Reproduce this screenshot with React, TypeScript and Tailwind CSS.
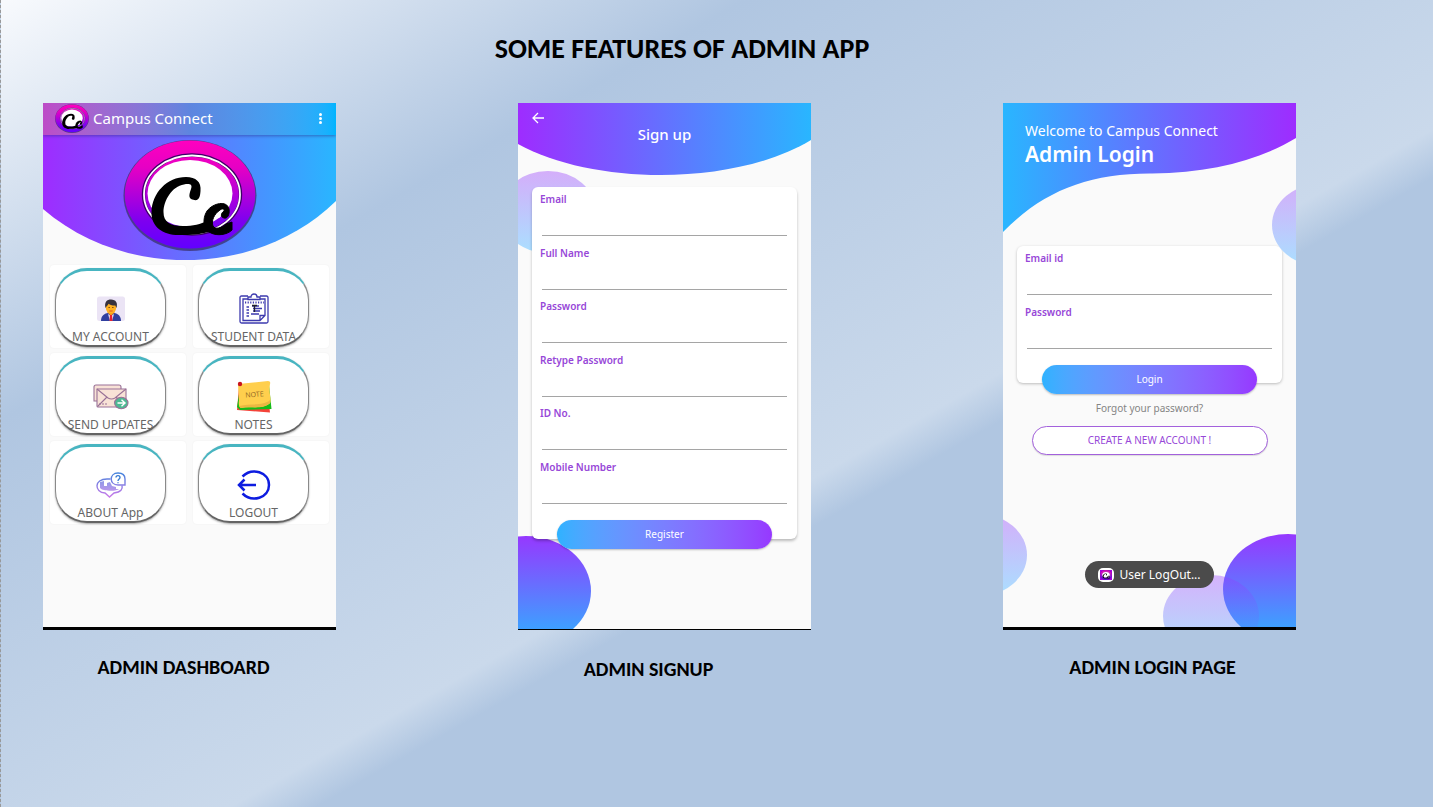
import React from "react";

const heading = "font-[Carlito,Lato,sans-serif] font-bold text-black";

function Mark({ className, id }: { className: string; id: string }) {
  return (
    <svg className={className} viewBox="0 0 134 112" preserveAspectRatio="none" aria-hidden="true">
      <defs>
        <linearGradient id={id} x1="0" y1="0" x2="0" y2="1">
          <stop offset="0" stopColor="#ff00bf" />
          <stop offset="0.25" stopColor="#e600c4" />
          <stop offset="0.75" stopColor="#7d00f0" />
          <stop offset="1" stopColor="#6200ff" />
        </linearGradient>
      </defs>
      <ellipse cx="67" cy="56.5" rx="66.5" ry="55.5" fill="#39306b" opacity="0.75" />
      <ellipse cx="67" cy="55.5" rx="65.3" ry="54" fill={`url(#${id})`} />
      <ellipse cx="69" cy="55.5" rx="48.5" ry="39.5" fill="none" stroke="#3c0065" strokeWidth="3.4" />
      <ellipse cx="69" cy="55.5" rx="48" ry="39" fill="none" stroke="#fff" strokeWidth="1.8" />
      <ellipse cx="67" cy="54.5" rx="42.5" ry="33.5" fill="#fff" />
      <path d="M68 60 C65 58 67 53 68 50 C70 45 66 44.5 61 45.5 C49 47 40.5 62 40.5 73 C40.5 83 47 87 60 87 C70 87 78 85 84 82 L88 92 C78 96 66 96 58 96 C42 97 28 89 28.5 73 C29 54 44 38 63 38 C73 38 78.5 43 77.5 52 C77 60 75 63 68 60Z" fill="#000" />
      <path d="M101 79 C97 78 98 74 101 72 C102 70 99 69 97 71 C91 75 88 82 90 87 C92 91 99 89 103 85 L109 83 V91 C104 96 94 97 88 94 C80 91 79 80 84 72 C90 64 104 61 106 70 C107 76 104 80 101 79Z" fill="#000" stroke="#000" strokeWidth="1" />
    </svg>
  );
}

function AccountIcon() {
  return (
    <svg width="30" height="26" viewBox="0 0 30 26">
      <rect x="1" y="0.5" width="28" height="24.5" rx="2.5" fill="#ebe4f5" />
      <path d="M5 25 C5 19 9 17.5 12 17 H18 C22 17.5 25 20 25 25Z" fill="#303f9f" />
      <path d="M11.5 16.5 L15 20 L18.5 16.5 V13 H11.5Z" fill="#f59a16" />
      <path d="M12 18 L15 20 L18 18 L16 25 H14Z" fill="#e7ddf2" />
      <path d="M14 19 H16 L16.5 25 H13.5Z" fill="#e62131" />
      <ellipse cx="15" cy="11.5" rx="5.2" ry="6" fill="#ffb022" />
      <path d="M9.5 12 C8 6 11 3.5 15 3.5 C20 3.5 22 7 20.5 12 L19.3 9.5 C16 9.5 13 8.5 12.5 7.7 C12 9.5 10.8 9.5 10.8 10Z" fill="#37323e" />
      <path d="M12.5 11.5 H13.8 M16.2 11.5 H17.5" stroke="#70420f" strokeWidth="1" />
      <path d="M13.3 15 H16.7" stroke="#d9451e" strokeWidth="0.8" />
    </svg>
  );
}

function ClipboardIcon() {
  return (
    <svg width="30" height="32" viewBox="0 0 30 32" fill="none" stroke="#3d3aae" strokeWidth="1.3">
      <path d="M9 3 H2.5 Q1 3 1 4.5 V28.5 Q1 30 2.5 30 H27.5 Q29 30 29 28.5 V4.5 Q29 3 27.5 3 H21" />
      <path d="M9 6.5 V4 H12 C12 0 18 0 18 4 H21 V6.5Z" />
      <path d="M9 6 H4 V27.5 H21 L26 22.5 V6 H21 M21 27.5 V22.5 H26" />
      <path d="M6 9.5 H25" strokeDasharray="1.2 1.4" strokeWidth="2" />
      <path d="M7.5 14 H10 M7.5 17 H10 M7.5 20 H10 M7.5 23 H10" />
      <path d="M13 13 H20 M14 15.5 H23 M14 18 H21 M12 21 H20" />
      <path d="M13 12.5 H18 M15.5 12 V19" stroke="#20202b" />
    </svg>
  );
}

function MailIcon() {
  return (
    <svg width="36" height="26" viewBox="0 0 36 26" fill="#f8e2d6" stroke="#997197" strokeWidth="1.1">
      <path d="M1 3 Q1 1 3 1 H26 Q28 1 28 3 V17 H1Z" />
      <path d="M4 5 H33 V22 Q33 23 32 23 H5 Q4 23 4 22Z" />
      <path d="M4 5 L15 14 Q18.5 16 22 14 L33 5 M4.5 22.5 L14 13 M32.5 22.5 L23 13" fill="none" />
      <path d="M6 20 H15" strokeDasharray="2 1" />
      <ellipse cx="28.3" cy="19" rx="6.7" ry="5.7" fill="#4eb993" />
      <path d="M24.5 19 H31.5 M28.5 15.8 L32 19 L28.5 22.2" stroke="#fff" strokeWidth="1.4" fill="none" />
    </svg>
  );
}

function NoteIcon() {
  return (
    <svg width="36" height="34" viewBox="0 0 36 34">
      <path d="M3 7 L31 9 L34 32.5 L1 30Z" fill="#f44339" />
      <path d="M4 8 L33 5 L35.5 29 L4 30 L1 27Z" fill="#16bc18" />
      <path d="M2 4 L32 1 Q35 1 34 4 C32 13 37 22 33 24 C26 29 16 26 5 28 Q2 27 3 20Z" fill="#ffcf4d" />
      <path d="M5 28 C16 26 27 30 34 23 L34 20 C28 26 15 23 3 26Z" fill="#ecb743" />
      <circle cx="4" cy="4" r="2.2" fill="#c9151e" />
      <text x="18.5" y="17" textAnchor="middle" fontSize="7" fontFamily="Open Sans, sans-serif" fill="#8c6424" transform="rotate(-4 18 15)">NOTE</text>
    </svg>
  );
}

function AboutIcon() {
  return (
    <svg width="30" height="26" viewBox="0 0 30 26">
      <defs>
        <linearGradient id="about-ink" gradientUnits="userSpaceOnUse" x1="0" y1="0" x2="0" y2="26">
          <stop stopColor="#3f84dc" /><stop offset="1" stopColor="#d078ea" />
        </linearGradient>
      </defs>
      <g fill="none" stroke="url(#about-ink)" strokeWidth="1.4">
        <path d="M14.5 7 H11 C-2 7 -2 20 9 21 L13.5 25 L18 21 C25 20 27 17 26 13.5" />
        <path d="M22 1 C13 1 13 13 22 13 H29 V7 C29 3 26 1 22 1Z" />
      </g>
      <path d="M4 14 V10 L8 9 V14 H11 V11 L14 10 L16 14 L20 15 V17 H23 C20 20 6 19 4 16Z" fill="url(#about-ink)" opacity="0.8" />
      <path d="M20 5.5 C20 3 24 3 24 5.5 C24 7 22 7 22 9 M22 10.3 V11.3" fill="none" stroke="#397bd2" strokeWidth="1.4" />
    </svg>
  );
}

function ExitIcon() {
  return (
    <svg width="34" height="30" viewBox="0 0 34 30" fill="none" stroke="#0d1ce0" strokeWidth="2.5">
      <path d="M5.5 6.5 C15 -3 32 2 32 15 C32 28 15 33 5.5 23.5" />
      <path d="M2 15 H19 M7.5 9.5 L2 15 L7.5 20.5" />
    </svg>
  );
}

const tiles = [
  { label: "MY ACCOUNT", icon: <AccountIcon /> },
  { label: "STUDENT DATA", icon: <ClipboardIcon /> },
  { label: "SEND UPDATES", icon: <MailIcon /> },
  { label: "NOTES", icon: <NoteIcon /> },
  { label: "ABOUT App", icon: <AboutIcon /> },
  { label: "LOGOUT", icon: <ExitIcon /> },
];

function Tile({ label, icon }: { label: string; icon: React.ReactNode }) {
  return (
    <div className="rounded-sm bg-white pt-[3px] pb-px pl-[5px] shadow-[0_0_2px_rgba(0,0,0,0.06)]">
      <button className="flex h-[79px] w-[111px] flex-col items-center justify-end rounded-[32px] border-x border-t-[3px] border-b-2 border-x-[#8a8a8a] border-t-[#48b5c1] border-b-[#646464] bg-white shadow-[0_1px_2px_rgba(0,0,0,0.35)]">
        <span className="mb-[2px] flex h-9 items-center justify-center">{icon}</span>
        <span className="text-[12px] leading-4 whitespace-nowrap text-[#666]">{label}</span>
      </button>
    </div>
  );
}

function Dashboard() {
  return (
    <section className="relative isolate flex h-[527px] w-[293px] flex-col overflow-hidden border-b-[3px] border-black bg-[#fafafa]">
      <header className="flex h-8 items-center bg-linear-to-r from-[#bd4cc7] via-[#5e85df] to-[#00b4ff] px-3 pb-[2px] shadow-[0_1px_3px_rgba(40,40,130,0.5)]">
        <Mark id="mark-small" className="h-[29px] w-[34px]" />
        <h2 className="ml-1 flex-1 text-[15px] text-white">Campus Connect</h2>
        <button aria-label="More options" className="flex flex-col gap-px px-[2px]">
          <i className="size-[3px] rounded-full bg-white" />
          <i className="size-[3px] rounded-full bg-white" />
          <i className="size-[3px] rounded-full bg-white" />
        </button>
      </header>
      <div className="relative -z-10 flex h-[130px] justify-center">
        <svg className="absolute inset-0 -z-10 h-[125px] w-full" viewBox="0 0 293 125" preserveAspectRatio="none">
          <defs><linearGradient id="dash-sky"><stop stopColor="#9e2cff" /><stop offset="1" stopColor="#29b6ff" /></linearGradient></defs>
          <path d="M0 0 H293 V66 C214 143 81 144 0 74Z" fill="url(#dash-sky)" />
        </svg>
        <Mark id="mark-large" className="mt-1 h-28 w-[134px]" />
      </div>
      <div className="grid grid-cols-2 gap-x-[7px] gap-y-[5px] px-[7px]">
        {tiles.map((tile) => <Tile key={tile.label} {...tile} />)}
      </div>
    </section>
  );
}

function Field({ id, label, type = "text" }: { id: string; label: string; type?: string }) {
  return (
    <div className="flex flex-col">
      <label htmlFor={id} className="text-[10px] leading-4 font-semibold text-[#9747d8]">{label}</label>
      <input id={id} type={type} className="mx-[2px] h-[29px] border-b border-[#a5a5a5] bg-transparent text-xs outline-none" />
    </div>
  );
}

const primary = "mx-auto mt-2 flex h-[29px] w-[215px] items-center justify-center rounded-full bg-linear-to-r from-[#2eb2ff] to-[#9638ff] text-[10px] text-white shadow-[0_1px_2px_rgba(0,0,0,0.25)]";

function SignUp() {
  const fields = [
    ["email", "Email", "email"], ["name", "Full Name", "text"],
    ["new-password", "Password", "password"], ["retype", "Retype Password", "password"],
    ["id-no", "ID No.", "text"], ["mobile", "Mobile Number", "tel"],
  ];
  return (
    <section className="relative isolate h-[527px] w-[293px] overflow-hidden border-b border-black bg-[#fafafa]">
      <svg className="absolute inset-0 -z-10 h-[526px] w-full" viewBox="0 0 293 526" preserveAspectRatio="none">
        <defs>
          <linearGradient id="sign-sky"><stop stopColor="#9e2cff" /><stop offset="1" stopColor="#29b6ff" /></linearGradient>
          <linearGradient id="sign-pale" x1="0" y1="0" x2="0" y2="1"><stop stopColor="#d4aefa" /><stop offset="1" stopColor="#aadfff" /></linearGradient>
          <linearGradient id="sign-deep" x1="0" y1="0" x2="0" y2="1"><stop stopColor="#9638ff" /><stop offset="1" stopColor="#2eb2ff" /></linearGradient>
        </defs>
        <path d="M0 0 H293 V37 C217 83 76 83 0 41Z" fill="url(#sign-sky)" />
        <ellipse cx="30" cy="109" rx="48" ry="41" fill="url(#sign-pale)" />
        <ellipse cx="8" cy="488" rx="65" ry="55" fill="url(#sign-deep)" />
      </svg>
      <header className="h-[84px] px-3 pt-2 text-white">
        <button aria-label="Back" className="block">
          <svg width="16" height="14" viewBox="0 0 16 14" fill="none" stroke="#fff" strokeWidth="1.3"><path d="M14 7 H3 M8 2 L3 7 L8 12" /></svg>
        </button>
        <h2 className="text-center text-[15px] leading-[18px] font-medium">Sign up</h2>
      </header>
      <form className="mx-[14px] h-[352px] rounded-md bg-white px-2 pt-1 shadow-[0_2px_3px_rgba(0,0,0,0.25)]">
        <div className="grid h-[321px] auto-rows-fr">
          {fields.map(([id, label, type]) => <Field key={id} id={id} label={label} type={type} />)}
        </div>
        <button type="button" className={primary}>Register</button>
      </form>
    </section>
  );
}

function Login() {
  return (
    <section className="relative isolate h-[527px] w-[293px] overflow-hidden border-b-[3px] border-black bg-[#fafafa]">
      <svg className="absolute inset-0 -z-10 h-[524px] w-full" viewBox="0 0 293 524" preserveAspectRatio="none">
        <defs>
          <linearGradient id="login-sky"><stop stopColor="#29b6ff" /><stop offset="1" stopColor="#9e2cff" /></linearGradient>
          <linearGradient id="login-pale" x1="0" y1="0" x2="0" y2="1"><stop stopColor="#d4aefa" /><stop offset="1" stopColor="#aadfff" /></linearGradient>
          <linearGradient id="login-deep" x1="0" y1="0" x2="0" y2="1"><stop stopColor="#9638ff" /><stop offset="1" stopColor="#2eb2ff" /></linearGradient>
        </defs>
        <path d="M0 0 H293 V35 C257 57 208 70 149 70.5 C86 70 40 88 0 129Z" fill="url(#login-sky)" />
        <ellipse cx="-24" cy="452" rx="48" ry="41" fill="url(#login-pale)" />
        <ellipse cx="285" cy="486" rx="65" ry="55" fill="url(#login-deep)" />
        <ellipse cx="208" cy="513" rx="48" ry="41" fill="url(#login-deep)" opacity="0.37" />
      </svg>
      <header className="h-[143px] px-[22px] pt-[18px] text-white">
        <p className="text-[14px] leading-[19px]">Welcome to Campus Connect</p>
        <h2 className="text-[21px] leading-7 font-semibold">Admin Login</h2>
      </header>
      <form className="mx-[14px] h-[137px] rounded-md bg-white px-2 pt-1 shadow-[0_1px_3px_rgba(0,0,0,0.25)]">
        <div className="grid h-[107px] auto-rows-fr">
          <Field id="login-email" label="Email id" type="email" />
          <Field id="login-password" label="Password" type="password" />
        </div>
        <button type="button" className={primary}>Login</button>
      </form>
      <svg className="absolute top-[84px] right-0 h-[82px] w-6" viewBox="0 0 24 82"><ellipse cx="48" cy="38" rx="48" ry="41" fill="url(#login-pale)" /></svg>
      <div className="mt-4 flex flex-col items-center">
        <a href="#forgot" className="text-[10px] leading-[18px] text-[#858585]">Forgot your password?</a>
        <button className="mt-[9px] h-[29px] w-[236px] rounded-full border border-[#a361dc] bg-white text-[10px] text-[#9747d8] shadow-[0_1px_1px_rgba(0,0,0,0.12)]">CREATE A NEW ACCOUNT !</button>
      </div>
      <div role="status" className="absolute top-[458px] left-[82px] flex h-[27px] w-[129px] items-center justify-center gap-[5px] rounded-full bg-[#4b4b4b] text-[12px] text-white">
        <span className="flex h-[14px] w-4 items-center justify-center rounded-[5px] bg-white"><span className="bg-[#a600dc]"><Mark id="mark-toast" className="h-[10px] w-3" /></span></span>
        <span>User LogOut...</span>
      </div>
    </section>
  );
}

export default function App() {
  return (
    <main className="min-h-screen border-l border-dashed border-[#999] bg-[linear-gradient(to_bottom_right,#f8fafd_0%,#b0c6e1_26%,#cad9eb_58%,#b0c6e1_61%,#b0c6e1_100%)] pt-[33px] font-['Noto_Sans',sans-serif]">
      <h1 className={`${heading} pr-[70px] text-center text-[28px] leading-8`}>SOME FEATURES OF ADMIN APP</h1>
      <div className="mt-[38px] flex justify-between pr-[137px] pl-[42px]">
        <figure><Dashboard /><figcaption className={`${heading} mt-6 pr-3 text-center text-[20px] leading-[26px]`}>ADMIN DASHBOARD</figcaption></figure>
        <figure className="pr-[10px]"><SignUp /><figcaption className={`${heading} mt-[26px] pr-8 text-center text-[20px] leading-[26px]`}>ADMIN SIGNUP</figcaption></figure>
        <figure><Login /><figcaption className={`${heading} mt-6 pl-[6px] text-center text-[20px] leading-[26px]`}>ADMIN LOGIN PAGE</figcaption></figure>
      </div>
    </main>
  );
}
